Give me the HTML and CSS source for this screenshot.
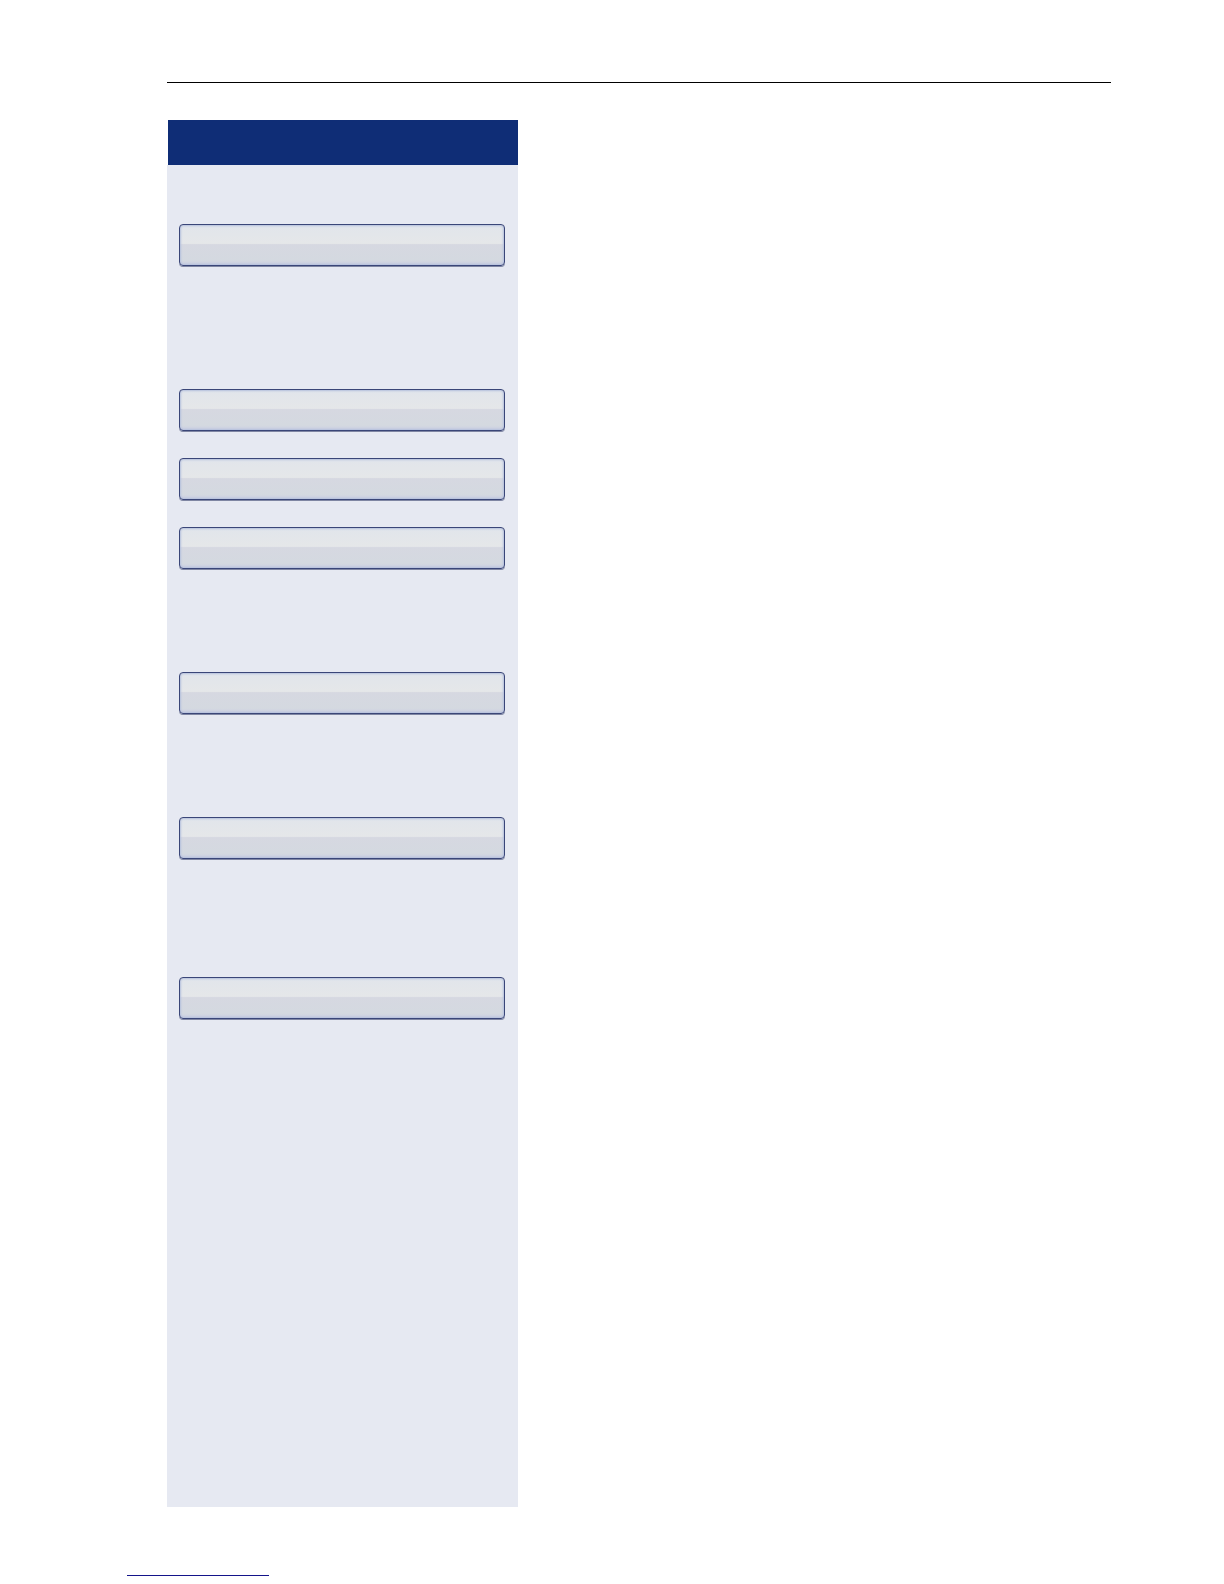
FILE: index.html
```
<!DOCTYPE html>
<html lang="en">
<head>
<meta charset="utf-8">
<title>Options</title>
<link rel="stylesheet" href="styles.css">
</head>
<body>
<div class="page">
  <header class="rule"></header>
  <main class="content">
    <aside class="panel">
      <div class="panel-header"></div>
      <div class="panel-body">
        <button class="key" type="button" aria-label="Option 1"></button>
        <div class="key-group">
          <button class="key" type="button" aria-label="Option 2"></button>
          <button class="key" type="button" aria-label="Option 3"></button>
          <button class="key" type="button" aria-label="Option 4"></button>
        </div>
        <button class="key" type="button" aria-label="Option 5"></button>
        <button class="key" type="button" aria-label="Option 6"></button>
        <button class="key key-last" type="button" aria-label="Option 7"></button>
      </div>
    </aside>
  </main>
  <footer class="footer"><a class="footer-link" href="#" aria-label="Back to top"></a></footer>
</div>
</body>
</html>
```
FILE: styles.css
```
* {
  box-sizing: border-box;
}

body {
  margin: 0;
  background: #fff;
  font-family: "Liberation Sans", Arial, sans-serif;
}

.page {
  display: flex;
  flex-direction: column;
  min-height: 100vh;
  padding: 82px 113px 8px 127px;
}

.rule {
  margin-left: 40px;
  border-top: 1px solid #000;
}

.content {
  display: flex;
  flex: 1;
  padding: 37px 0 0 40px;
}

.panel {
  display: flex;
  flex-direction: column;
  flex: 0 0 351px;
}

.panel-header {
  height: 45px;
  margin-left: 1px;
  background: #0f2d76;
}

.panel-body {
  display: flex;
  flex-direction: column;
  flex: 1;
  gap: 103px;
  padding: 59px 13px 40px 12px;
  background: #e6e9f2;
}

.key-group {
  display: flex;
  flex-direction: column;
  gap: 27px;
  margin-top: 20px;
}

.key {
  display: block;
  flex: none;
  width: 100%;
  height: 42px;
  padding: 0;
  border: 1px solid #3a4678;
  border-radius: 4px;
  background: linear-gradient(#e1e5eb, #e5e7e9 46%, #d6d8e1 49%, #d4d9e0 88%, #cccfe2);
  box-shadow: inset 0 0 2px 1px #b4bfdc, 0 1px 0 #7f86a3;
}

.key-last {
  margin-top: 15px;
}

.footer {
  padding-top: 68px;
}

.footer-link {
  display: block;
  width: 142px;
  border-top: 1px solid #14148a;
}
```
